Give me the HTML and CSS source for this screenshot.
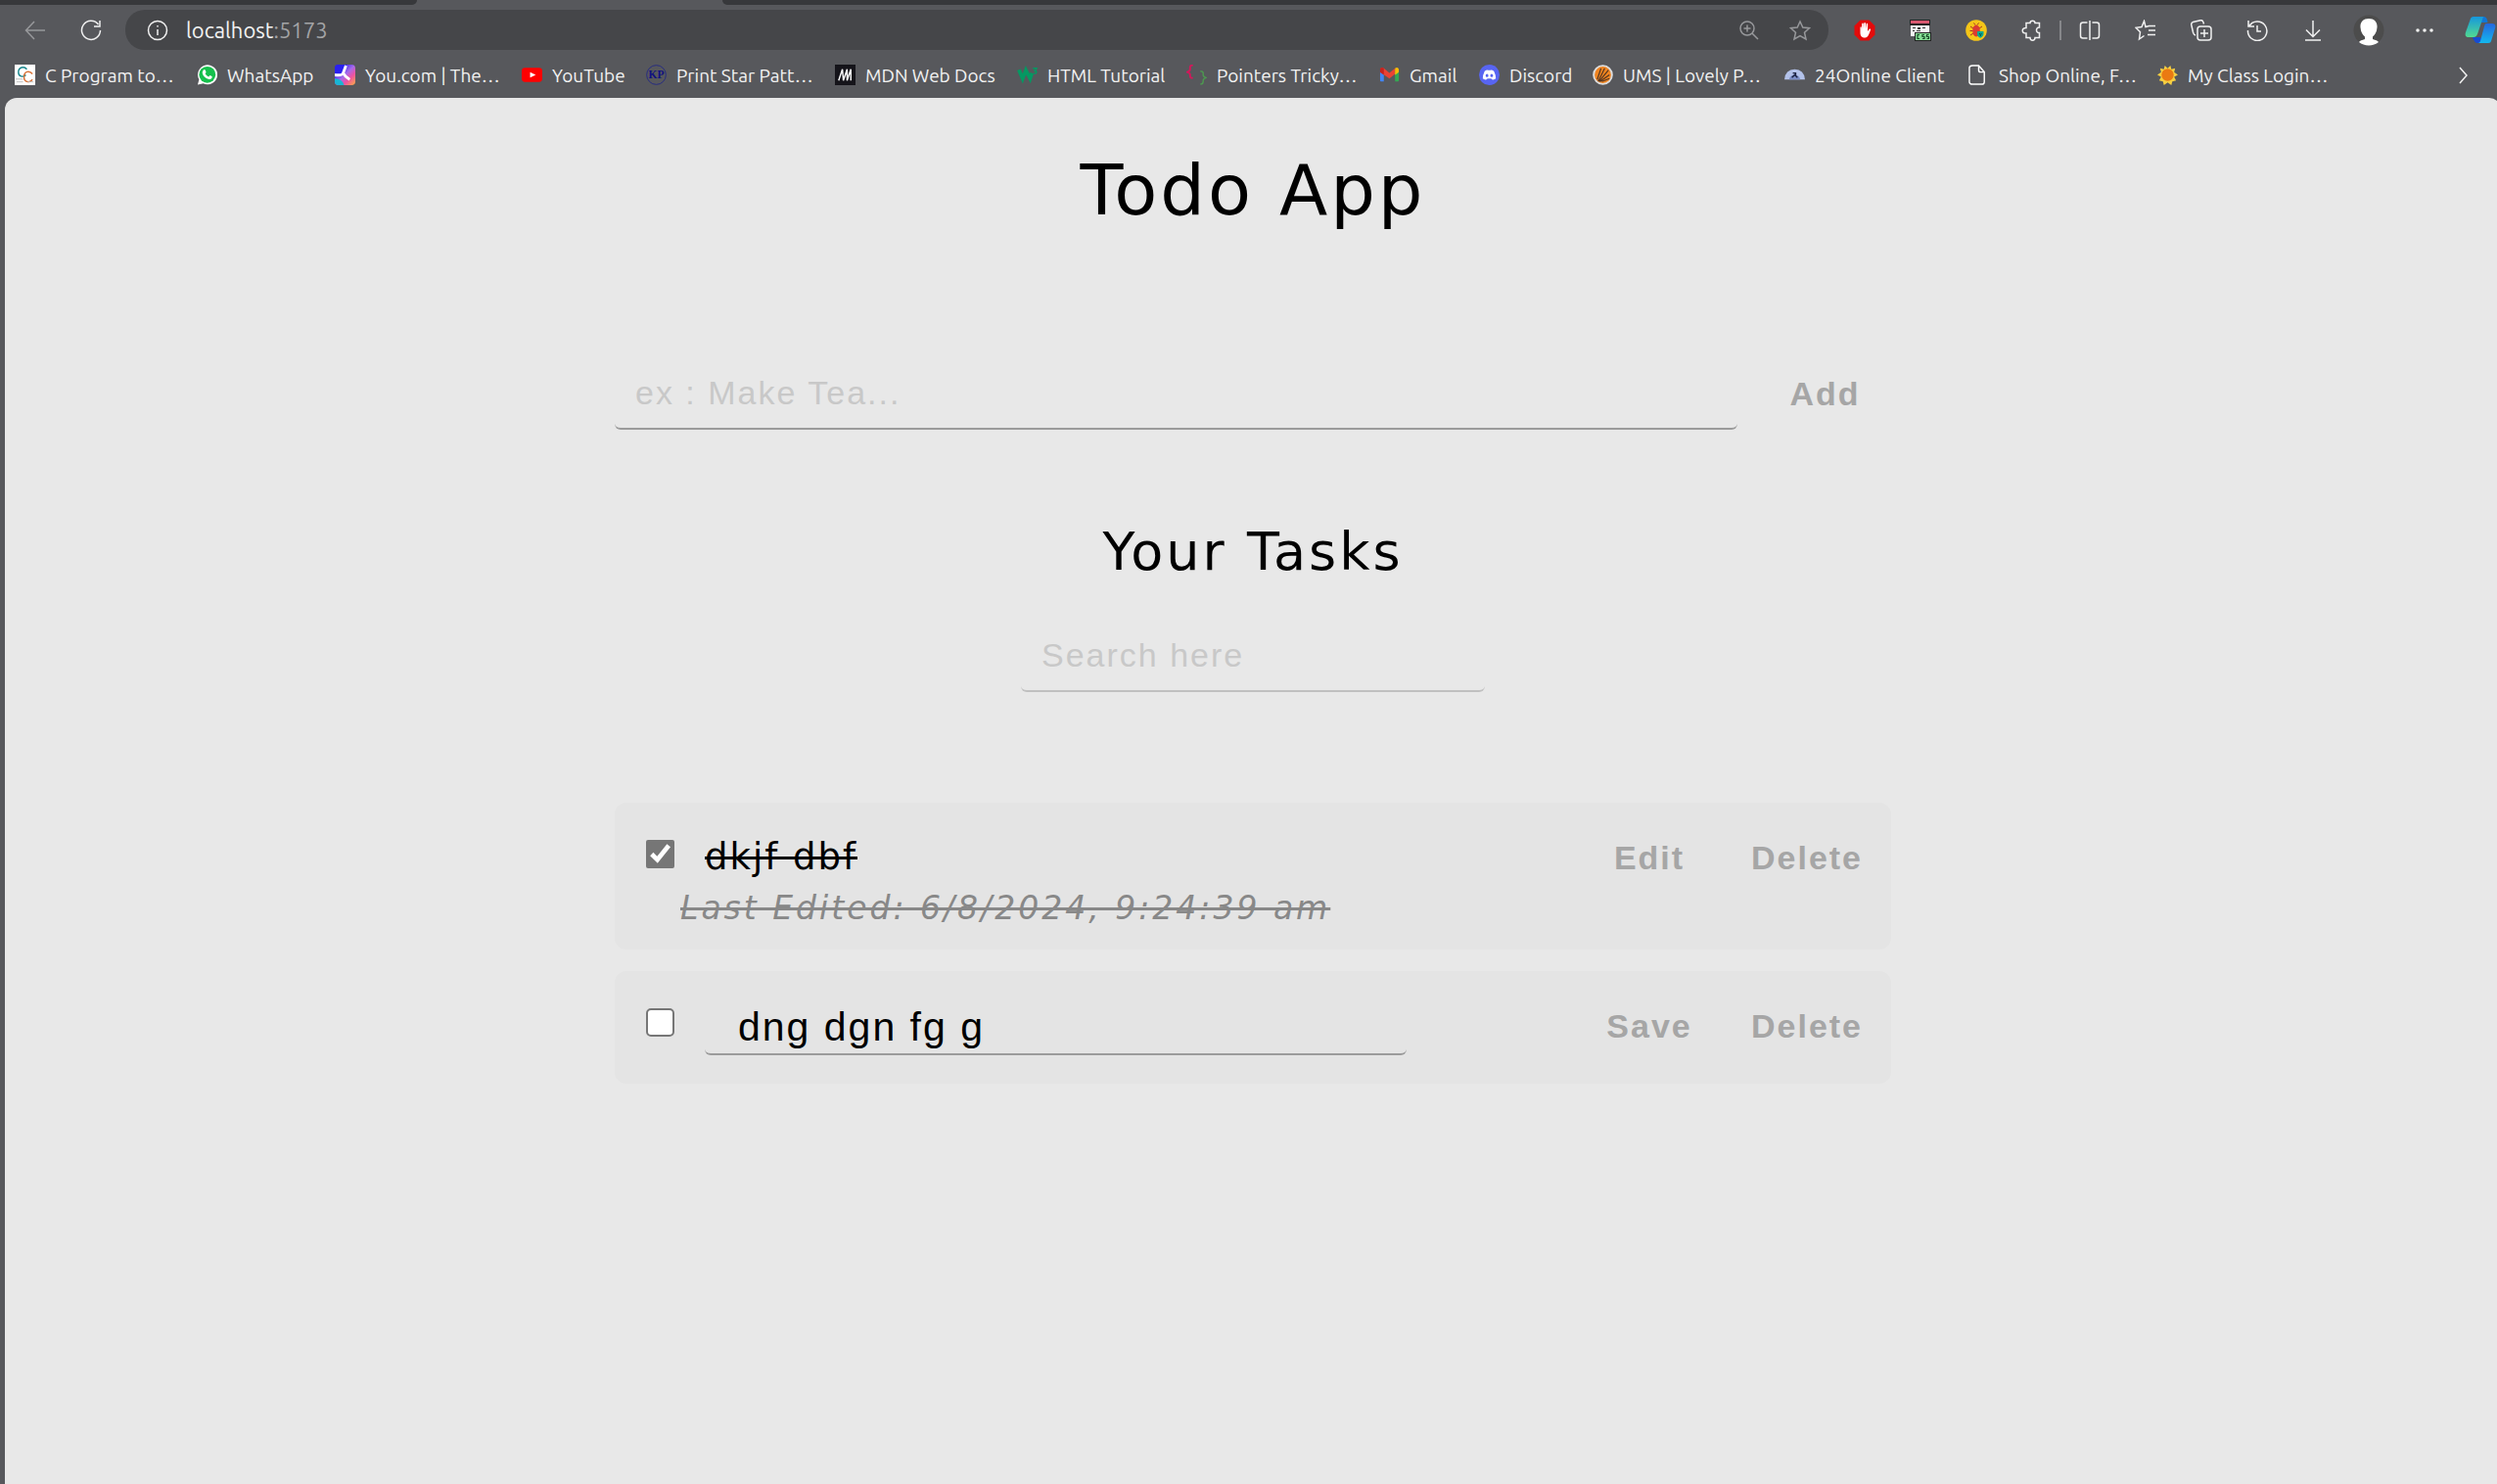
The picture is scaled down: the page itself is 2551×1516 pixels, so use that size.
FILE: index.html
```html
<!DOCTYPE html>
<html lang="en">
<head>
<meta charset="utf-8">
<title>Todo App</title>
<link rel="stylesheet" href="styles.css">
</head>
<body>
<header class="browser">
  <div class="tabs"><span class="tab-left"></span><span class="tab-active"></span><span class="tab-right"></span></div>
  <div class="toolbar">
    <button class="tool dim" aria-label="Back"><svg viewBox="0 0 22 22"><path d="M21 11H1.500M10 2 1.500 11l8.500 9"/></svg></button>
    <button class="tool" aria-label="Reload"><svg viewBox="0 0 22 22"><path d="M18.500 5A9.500 9.500 0 1 0 20.500 11M20 1v6h-6"/></svg></button>
    <div class="address">
      <svg class="info" viewBox="0 0 22 22"><circle cx="11" cy="11" r="9.500"/><path d="M11 10v6M11 6v1.500"/></svg>
      <span class="url">localhost<span class="port">:5173</span></span>
      <button class="tool dim" aria-label="Zoom"><svg viewBox="0 0 22 22"><circle cx="9" cy="9" r="7"/><path d="m14 14 6 6M9 5.500v7M5.500 9h7"/></svg></button>
      <button class="tool dim" aria-label="Add to favorites"><svg viewBox="0 0 22 22"><path d="m11 2 2.800 6 6.700.700-5 4.500 1.500 6.800-6-3.400-6 3.400 1.500-6.800-5-4.500 6.700-.700z"/></svg></button>
    </div>
    <div class="actions">
      <button class="tool" aria-label="Ad blocker"><svg viewBox="0 0 22 22"><path fill="#e30b0b" stroke="none" d="M6.500.5h9l6 6v9l-6 6h-9l-6-6v-9z"/><path fill="#fff" stroke="none" d="M6.500 8c0-1 1.200-1 1.300 0l.2 3 .2-6.500c.1-1.200 1.500-1.200 1.600 0l.2 5L10.300 4c0-1.300 1.600-1.300 1.700 0l.2 5.500.5-5c.1-1.200 1.500-1 1.500.2L14 12l1.500-2c.7-1 2-.3 1.500.7-1.500 3.500-2.500 7.800-5.500 7.800-3.500 0-5-2-5-5z"/></svg></button>
      <button class="tool" aria-label="CSS viewer"><svg viewBox="0 0 22 22"><g stroke="none"><path fill="#222" d="M0 0h21v6H0z"/><path fill="#d8576f" d="M1 1h19v3H1z"/><path fill="#f5f5f5" d="M1 6h19v11H1z"/><path fill="#333" d="M3 8h3v1H3zM8 8h3v2H8zM13 8h3v1h-3zM3 11h2v1H3zM7 11h4v1H7z"/><path fill="#222" d="M5 13h17v9H5z"/><path fill="#85dc94" d="M6 14h15v7H6z"/></g><path stroke="#174c27" stroke-width="1.200" d="M10 15.500H8v4h2M15 15.500h-2v2h2v2h-2M19.500 15.500h-2v2h2v2h-2"/></svg></button>
      <button class="tool" aria-label="Bug finder"><svg viewBox="0 0 22 22"><circle cx="11" cy="11" r="10.800" fill="#f5c518" stroke="none"/><path stroke="#a33726" stroke-width="1" d="M5 7l3 2M4.500 11.500h3M5 16l3-2M17 7l-3 2M8.500 3.500l1.500 2M13.500 3.500l-1.500 2"/><ellipse cx="11" cy="11.500" rx="3.800" ry="6" fill="#db3b32" stroke="none"/><path fill="#08aa91" stroke="none" d="M12 12h6.500v3c0 2-2 3-3.300 3.800-1.700-.8-3.200-1.800-3.200-3.800z"/><path stroke="#114b44" stroke-width="1" d="m14 14 1.300 1.500 1.300-1.500M15.300 15.500v1.500"/></svg></button>
      <button class="tool" aria-label="Extensions"><svg viewBox="0 0 22 22"><path d="M5 3.500h4c0-3 5-3 5 0h4.500V8c-4-.5-4 6 0 5.500v5H14c0 3.500-5 3.500-5 0H5V14c-5 0-5-5.500 0-5.500z"/></svg></button>
      <span class="divider"></span>
      <button class="tool" aria-label="Split screen"><svg viewBox="0 0 22 22"><path d="M8.500 3H4Q1.500 3 1.500 5.500v11Q1.500 19 4 19h4.500M13.500 3H18q2.500 0 2.500 2.500v11Q20.500 19 18 19h-4.500M11 1v20"/></svg></button>
      <button class="tool" aria-label="Favorites"><svg viewBox="0 0 22 22"><path d="M21 11h-7M21 15.500h-8M21 6.500h-6.500L11 7.500 9.500 1.500 7 7.500l-6 .8 4.500 4.500L4.500 20l5-3.500"/></svg></button>
      <button class="tool" aria-label="Collections"><svg viewBox="0 0 22 22"><path d="M5 16C3 15.500 3 14.500 2.500 13L.8 5.500C.5 4 1 3 2.500 2.500L10 .8c2-.5 3 1 3.500 3.700"/><rect x="7" y="7" width="14" height="14" rx="3"/><path d="M14 10v8M10 14h8"/></svg></button>
      <button class="tool" aria-label="History"><svg viewBox="0 0 22 22"><path d="M3 6.500A9.700 9.700 0 1 1 1.500 11M2 1v6h6M11 6v6h4"/></svg></button>
      <button class="tool" aria-label="Downloads"><svg viewBox="0 0 22 22"><path d="M11 1v16M4 10.500l7 7 7-7M3 21h16"/></svg></button>
      <button class="tool" aria-label="Profile"><svg class="large" viewBox="0 0 32 32"><circle cx="16" cy="16" r="15.500" fill="#4c4c4c" stroke="none"/><path fill="#fff" stroke="none" d="M16 4c6 0 9 4 8.500 9-.3 5-2.500 8-4.500 9.500V25c3 1 5 1.500 6 3-5 4.500-15 4.500-20 0 1-1.500 3-2 6-3v-2.500C10 21 7.800 18 7.500 13 7 8 10 4 16 4z"/></svg></button>
      <button class="tool" aria-label="Settings and more"><svg viewBox="0 0 22 22"><g fill="#eee" stroke="none"><circle cx="4" cy="11" r="1.800"/><circle cx="11" cy="11" r="1.800"/><circle cx="18" cy="11" r="1.800"/></g></svg></button>
      <button class="tool" aria-label="Copilot"><svg class="large" viewBox="0 0 32 32"><defs><linearGradient id="ca" x2="0" y2="1"><stop stop-color="#1597dd"/><stop offset="1" stop-color="#52da91"/></linearGradient><linearGradient id="cb" x2="0" y2="1"><stop stop-color="#2467df"/><stop offset="1" stop-color="#13b9ef"/></linearGradient></defs><g stroke="none"><path fill="#174bd1" d="M8 23h8l3 6h-5c-3 0-4-1-6-6z"/><path fill="#1177d5" d="M16 2h3c3 0 4 2 4.500 6H17z"/><path fill="url(#ca)" d="M9 2h10l-6 18c-1 2-2 3-4 3H4c-3 0-4-2-3-5L6 4c.5-1 1-2 3-2z"/><path fill="url(#cb)" d="M22 9h6c3 0 4 2 3 5l-4 13c-.5 1-1 2-3 2H14c2-1 2-2 2.500-4L20 12c.5-2 1-3 2-3z"/></g></svg></button>
    </div>
  </div>
  <nav class="bookmarks">
    <a href="#"><svg viewBox="0 0 22 22"><path fill="#fff" d="M0 0h22v22H0z"/><g fill="none" stroke-width="1.500"><path stroke="#17858c" d="M13 5C10 1 4 3 4 8c0 5 5 6 8 3"/><path stroke="#d87035" d="M19 10c-3-4-9-3-9 3 0 6 6 7 9 3"/></g><path stroke="#bbb" d="M1 15.500h8M2 18.500h7M14 18.500h6"/></svg>C Program to…</a>
    <a href="#"><svg viewBox="0 0 22 22"><path fill="#fff" d="M1 21.500 2.500 16A10.500 10.500 0 1 1 7 20.200z"/><circle cx="11.300" cy="10.800" r="8.800" fill="#16c04d"/><path fill="#fff" d="M7 6q1.500-1.500 2.500.5l.5 2-1 1.200q1.500 2.500 3.800 3.300l1.200-1.500 2.500 1.200q0 3.300-3.500 3Q7 14 6 9 6 7 7 6z"/></svg>WhatsApp</a>
    <a href="#"><svg viewBox="0 0 22 22"><defs><linearGradient id="yo" x2="1" y2="1"><stop offset=".2" stop-color="#2a20ef"/><stop offset=".5" stop-color="#a66bea"/><stop offset=".7" stop-color="#ed52a2"/><stop offset="1" stop-color="#ffb040"/></linearGradient></defs><rect width="22" height="22" rx="4" fill="url(#yo)"/><path fill="#2a20ef" d="M4 0h9L9 10 0 11V4q0-4 4-4z"/><path fill="#18b6d4" d="M0 15q8 0 10 7H4q-4 0-4-4z"/><path fill="none" stroke="#fff" stroke-width="3" d="M0 11q8 1 9-2l3-8M9 9q2 4 7 7"/></svg>You.com | The…</a>
    <a href="#"><svg viewBox="0 0 22 22"><rect y="3.500" width="22" height="15" rx="3.500" fill="red"/><path fill="#fff" d="m9 8 6 3-6 3z"/></svg>YouTube</a>
    <a href="#"><svg viewBox="0 0 22 22"><circle cx="11" cy="11" r="10.300" fill="none" stroke="#252a82"/><text class="kp" x="11" y="15" text-anchor="middle">KP</text></svg>Print Star Patt…</a>
    <a href="#"><svg viewBox="0 0 22 22"><path fill="#15141a" d="M0 0h22v22H0z"/><path fill="none" stroke="#fff" stroke-width="1.500" d="m4 17 4-12 1 12 4-12v12l4-12v12"/></svg>MDN Web Docs</a>
    <a href="#"><svg viewBox="0 0 22 22"><path fill="none" stroke="#059862" stroke-width="4" d="m2 5.500 4 9.500 3.500-9 4.500 9 2-6"/><path fill="none" stroke="#059862" stroke-width="1.500" d="M17 4h4l-2 2.500q3 .5 1 3h-2"/></svg>HTML Tutorial</a>
    <a href="#"><svg viewBox="0 0 22 22"><path fill="none" stroke="#d2185a" stroke-width="2" d="M7 1Q4 0 4 3v2q0 2-3 3 3 1 3 3v1q0 3 3 2"/><path fill="none" stroke="#4d9850" stroke-width="1.500" d="M15 7q3 0 3 2v2q0 2 3 3-3 1-3 3v1q0 3-3 3"/></svg>Pointers Tricky…</a>
    <a href="#"><svg viewBox="0 0 22 22"><path fill="#4285f4" d="M1 6h4v12H2q-1 0-1-1z"/><path fill="#34a853" d="M17 6h4v11q0 1-1 1h-3z"/><path fill="#ea4335" d="M1 5q1-3 4-1l6 5 6-5v6l-6 5L1 8z"/><path fill="#fbbc04" d="M17 4q3-2 4 1v3l-4 3z"/><path fill="#c5221f" d="M1 5q1-3 4-1v7L1 8z"/></svg>Gmail</a>
    <a href="#"><svg viewBox="0 0 22 22"><circle cx="11" cy="11" r="11" fill="#5865f2"/><path fill="#fff" fill-rule="evenodd" d="M6 7q2-1.500 4-1h2q2-.5 4 1 2 4 2 8-2 1.500-4 1l-1-1H9l-1 1q-2 .5-4-1 0-4 2-8zm2.500 3a1.500 1.700 0 1 0 .1 3.400A1.500 1.700 0 0 0 8.500 10zm5 0a1.500 1.700 0 1 0 .1 3.400 1.500 1.700 0 0 0-.1-3.400z"/></svg>Discord</a>
    <a href="#"><svg viewBox="0 0 22 22"><circle cx="11" cy="11" r="9.800" fill="#f08420" stroke="#ddd" stroke-width="2"/><path fill="none" stroke="#513522" stroke-width="1.200" d="M5 16 9 4M6 18l7-14M7 18 17 6M8 18l10-7M10 18l8-3"/></svg>UMS | Lovely P…</a>
    <a href="#"><svg viewBox="0 0 22 22"><path fill="#b3c2ea" d="M0 16Q1 5 11 5t11 11z"/><path fill="#7d8fc8" d="M5 16q1-5 6-5t6 5z"/><path fill="none" stroke="#1a2141" stroke-width="1.500" d="m8 14 3-3 3 3M9 9h3v3"/></svg>24Online Client</a>
    <a href="#"><svg viewBox="0 0 22 22"><path fill="none" stroke="#fff" stroke-width="1.500" d="M4.500 1H11l6 7v10.500q0 2.500-2.500 2.500h-10Q1 21 1 18.500v-15Q1 1 4.500 1zM11 1v5q0 2 2 2h4"/></svg>Shop Online, F…</a>
    <a href="#"><svg viewBox="0 0 22 22"><path fill="#f7cf40" d="m8 1 3 3 3-3 1 4 4-1-1 4 4 3-4 2 2 4-4 1-1 4-4-3-4 3-1-4-4-1 2-4-4-2 4-3-1-4 4 1z"/><circle cx="11" cy="11" r="6.500" fill="#eb7a12"/></svg>My Class Login…</a>
    <button class="tool more" aria-label="More bookmarks"><svg viewBox="0 0 22 22"><path d="m7 3 7 8-7 8"/></svg></button>
  </nav>
</header>
<main class="page">
  <div class="container">
    <h1>Todo App</h1>
    <form class="add-form">
      <input class="field add-field" type="text" placeholder="ex : Make Tea..." aria-label="New task">
      <button class="text-btn" type="button">Add</button>
    </form>
    <h2>Your Tasks</h2>
    <input class="field search-field" type="text" placeholder="Search here" aria-label="Search tasks">
    <ul class="tasks">
      <li class="task">
        <input class="check" type="checkbox" id="task-1" checked>
        <div class="body"><label class="name" for="task-1">dkjf dbf</label><em class="edited">Last Edited: 6/8/2024, 9:24:39 am</em></div>
        <div class="buttons"><button class="text-btn" type="button">Edit</button><button class="text-btn" type="button">Delete</button></div>
      </li>
      <li class="task">
        <input class="check" type="checkbox" aria-label="dng dgn fg g">
        <div class="body"><input class="field edit-field" type="text" value="dng dgn fg g" aria-label="Edit task"></div>
        <div class="buttons"><button class="text-btn" type="button">Save</button><button class="text-btn" type="button">Delete</button></div>
      </li>
    </ul>
  </div>
</main>
</body>
</html>
```
FILE: styles.css
```css
* { box-sizing: border-box; }

body {
  margin: 0;
  min-height: 100vh;
  display: flex;
  flex-direction: column;
  background: #57585c;
  font-family: "DejaVu Sans", sans-serif;
  overflow: hidden;
}

/* Browser chrome */
.browser {
  color: #f2f2f2;
  font-family: Ubuntu, "Open Sans", sans-serif;
}

.tabs { display: flex; height: 5px; }
.tab-left { width: 426px; background: #37383b; border-bottom-right-radius: 5px; }
.tab-active { width: 312px; }
.tab-right { flex: 1; background: #37383b; border-bottom-left-radius: 5px; }

.toolbar {
  display: flex;
  align-items: center;
  height: 51px;
  padding-left: 7px;
}

.tool {
  display: flex;
  align-items: center;
  justify-content: center;
  flex: none;
  width: 57px;
  height: 40px;
  padding: 0;
  border: 0;
  background: none;
}

.tool svg, .info {
  width: 22px;
  height: 22px;
  fill: none;
  stroke: #f0f0f0;
  stroke-width: 1.5;
}

.tool svg.large { width: 32px; height: 32px; }
.dim svg { stroke: #97989b; }

.address {
  display: flex;
  align-items: center;
  flex: 1;
  height: 41px;
  margin-left: 7px;
  padding: 0 3px 0 22px;
  border-radius: 20px;
  background: #454649;
}

.address .tool { width: 52px; }
.url { flex: 1; margin-left: 18px; font-size: 22px; }
.port { color: #a3a4a6; }

.actions { display: flex; align-items: center; margin-left: 8px; margin-right: -11px; }
.divider { width: 2px; height: 20px; background: #86878a; }

.bookmarks {
  display: grid;
  grid-template-columns: 186px 141px 191px 127px 193px 186px 173px 197px 102px 116px 196px 188px 193px 176px 1fr;
  align-items: center;
  height: 44px;
  padding: 0 0 3px 15px;
}

.bookmarks a {
  display: flex;
  align-items: center;
  gap: 10px;
  color: inherit;
  font-size: 19px;
  text-decoration: none;
  white-space: nowrap;
}

.bookmarks a svg { flex: none; width: 21px; height: 21px; }
.kp { font: bold 12px "Liberation Serif", serif; fill: #101080; }
.more { justify-self: end; margin-right: 6px; }

/* Todo page */
.page {
  flex: 1;
  margin: 0 -4px 0 5px;
  border-radius: 12px 12px 0 0;
  background: #e8e8e8;
  letter-spacing: 3px;
}

.container {
  display: flex;
  flex-direction: column;
  align-items: center;
  max-width: 1304px;
  margin: 0 auto;
  padding-top: 52px;
}

h1, h2 { margin: 0; font-weight: 400; }
h1 { font-size: 72px; line-height: 84px; }
h2 { margin-top: 93px; font-size: 54px; line-height: 64px; }

.field {
  padding: 0 21px;
  border: 0;
  border-bottom: 2px solid #9b9b9b;
  border-radius: 6px;
  background: none;
  color: #000;
  font: 34px "Liberation Sans", Arial, sans-serif;
  letter-spacing: 2px;
}

.field::placeholder { color: #c8c8c8; opacity: 1; }

.add-form {
  display: flex;
  align-items: center;
  width: 100%;
  margin-top: 130px;
}

.add-field { flex: 1; height: 73px; min-width: 0; }

.search-field {
  width: 474px;
  max-width: 100%;
  height: 73px;
  margin-top: 38px;
  border-color: #c0c0c0;
}

.text-btn {
  padding: 0;
  border: 0;
  background: none;
  color: #a6a6a6;
  font: bold 34px "Liberation Sans", Arial, sans-serif;
  letter-spacing: 2px;
}

.add-form .text-btn { width: 157px; padding-left: 22px; }

.tasks {
  display: flex;
  flex-direction: column;
  gap: 22px;
  width: 100%;
  margin: 113px 0 0;
  padding: 0;
  list-style: none;
}

.task {
  display: flex;
  align-items: flex-start;
  min-height: 115px;
  padding: 32px 0 14px 32px;
  border-radius: 12px;
  background: #e4e4e4;
}

.check {
  flex: none;
  width: 29px;
  height: 29px;
  margin: 6px 31px 0 0;
  accent-color: #767676;
}

.check:not(:checked) {
  appearance: none;
  border: 2px solid #767676;
  border-radius: 5px;
  background: #fff;
}

.body {
  display: flex;
  flex: 1;
  flex-direction: column;
  align-items: flex-start;
  min-width: 0;
}

.name, .edited { text-decoration: line-through; }
.name { font-size: 37px; line-height: 48px; letter-spacing: 2px; }
.edited { margin-left: -25px; color: #888; font-size: 33px; line-height: 56px; }

.edit-field {
  width: 717px;
  max-width: 100%;
  height: 54px;
  padding: 0 34px 2px;
  font-size: 41px;
}

.buttons { display: flex; flex: none; padding-top: 5px; }
.buttons .text-btn { width: 150px; }
.buttons .text-btn:last-child { width: 172px; }
```
